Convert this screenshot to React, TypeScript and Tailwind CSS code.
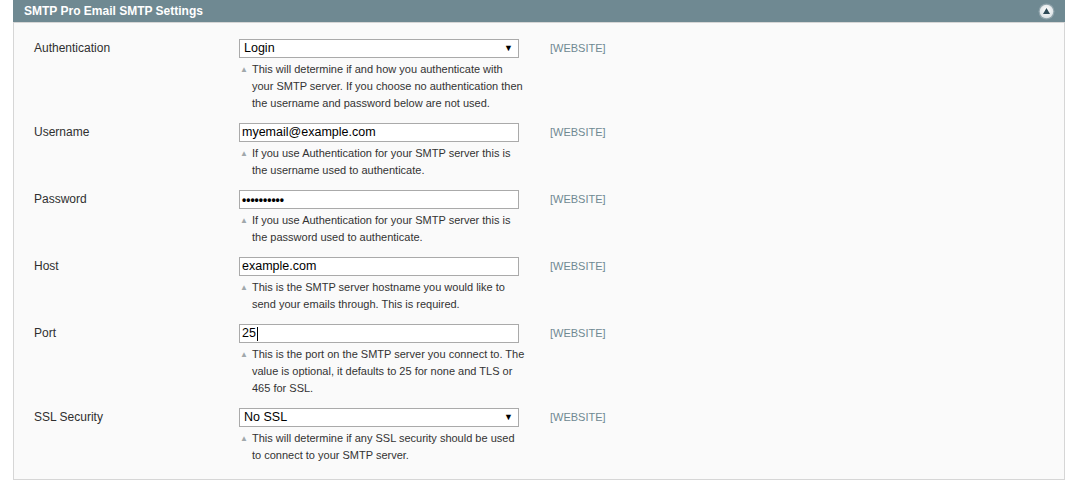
import React from 'react'

type Field = {
  label: string
  kind: 'select' | 'text' | 'password'
  value: string
  note: string[]
  caret?: boolean
}

const FIELDS: Field[] = [
  {
    label: 'Authentication',
    kind: 'select',
    value: 'Login',
    note: [
      'This will determine if and how you authenticate with',
      'your SMTP server. If you choose no authentication then',
      'the username and password below are not used.',
    ],
  },
  {
    label: 'Username',
    kind: 'text',
    value: 'myemail@example.com',
    note: ['If you use Authentication for your SMTP server this is', 'the username used to authenticate.'],
  },
  {
    label: 'Password',
    kind: 'password',
    value: '••••••••••',
    note: ['If you use Authentication for your SMTP server this is', 'the password used to authenticate.'],
  },
  {
    label: 'Host',
    kind: 'text',
    value: 'example.com',
    note: ['This is the SMTP server hostname you would like to', 'send your emails through. This is required.'],
  },
  {
    label: 'Port',
    kind: 'text',
    value: '25',
    caret: true,
    note: [
      'This is the port on the SMTP server you connect to. The',
      'value is optional, it defaults to 25 for none and TLS or',
      '465 for SSL.',
    ],
  },
  {
    label: 'SSL Security',
    kind: 'select',
    value: 'No SSL',
    note: ['This will determine if any SSL security should be used', 'to connect to your SMTP server.'],
  },
]

function CollapseIcon() {
  return (
    <svg width="17" height="17" viewBox="0 0 17 17">
      <defs>
        <radialGradient id="g" cx="50%" cy="40%" r="60%">
          <stop offset="0%" stopColor="#ffffff" />
          <stop offset="100%" stopColor="#d9e0e3" />
        </radialGradient>
      </defs>
      <circle cx="8.5" cy="8.5" r="8" fill="#8fa3ab" />
      <circle cx="8.5" cy="8.5" r="6.8" fill="url(#g)" />
      <path d="M8.5 5 L12 11 L5 11 Z" fill="#2e4a57" />
    </svg>
  )
}

function FieldInput({ field }: { field: Field }) {
  if (field.kind === 'select') {
    return (
      <div className="flex h-[19px] items-center justify-between border border-[#aaaaaa] bg-white pl-[4px] pr-[5px] text-[12.5px] text-black">
        <span>{field.value}</span>
        <span className="text-[9px]">▼</span>
      </div>
    )
  }
  return (
    <div className="flex h-[19px] items-center border border-[#aaaaaa] bg-white px-[2px] text-[12.5px] text-black">
      <span className={field.kind === 'password' ? 'text-[12px] font-bold' : ''}>{field.value}</span>
      {field.caret && <span className="ml-[1px] h-[14px] w-px bg-black" />}
    </div>
  )
}

export default function App() {
  return (
    <div className="h-[480px] w-full bg-white pl-[13px] pr-[18px]" style={{ fontFamily: '"Liberation Sans", Arial, sans-serif' }}>
      <div className="flex h-[23px] items-center justify-between border-b border-[#d6d6d6] bg-[#6f8992] pl-[11px] pr-[10px]">
        <span className="text-[12px] font-bold text-white">SMTP Pro Email SMTP Settings</span>
        <CollapseIcon />
      </div>
      <div className="border border-t-0 border-[#d6d6d6] bg-[#fafafa] pt-[11px] pb-[9px] pl-[20px]">
        {FIELDS.map((f) => (
          <div key={f.label} className="flex pt-[5px] pb-[6px]">
            <div className="w-[205px] text-[12px] leading-[19px] text-[#2f2f2f]">{f.label}</div>
            <div className="w-[280px]">
              <FieldInput field={f} />
              <div className="mt-[3px] flex text-[11px] leading-[17px] text-[#333333]">
                <span className="w-[13px] shrink-0 pl-[1px] text-[8px] text-[#a0a8ab]">▲</span>
                <div className="whitespace-nowrap">
                  {f.note.map((line) => (
                    <div key={line}>{line}</div>
                  ))}
                </div>
              </div>
            </div>
            <div className="ml-[31px] text-[11px] leading-[19px] text-[#6f8992]">[WEBSITE]</div>
          </div>
        ))}
      </div>
    </div>
  )
}
